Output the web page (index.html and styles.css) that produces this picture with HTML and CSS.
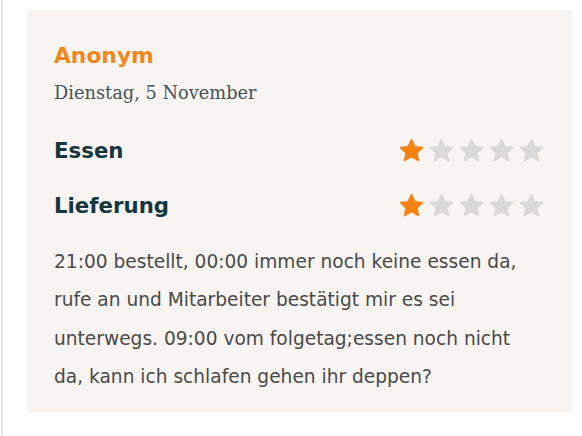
FILE: index.html
```html
<!DOCTYPE html>
<html lang="de">
<head>
<meta charset="utf-8">
<link rel="stylesheet" href="styles.css">
</head>
<body>
<div class="frame">
  <article class="card">
    <h2 class="author">Anonym</h2>
    <div class="date">Dienstag, 5 November</div>
    <div class="ratings">
      <div class="rating">
        <span class="label">Essen</span>
        <span class="stars">
          <svg class="star on" viewBox="0 0 24 24"><path d="M12 2.6l2.9 6.1 6.7.8-4.9 4.6 1.3 6.6L12 17.4l-6 3.3 1.3-6.6-4.9-4.6 6.7-.8z"/></svg>
          <svg class="star" viewBox="0 0 24 24"><path d="M12 2.6l2.9 6.1 6.7.8-4.9 4.6 1.3 6.6L12 17.4l-6 3.3 1.3-6.6-4.9-4.6 6.7-.8z"/></svg>
          <svg class="star" viewBox="0 0 24 24"><path d="M12 2.6l2.9 6.1 6.7.8-4.9 4.6 1.3 6.6L12 17.4l-6 3.3 1.3-6.6-4.9-4.6 6.7-.8z"/></svg>
          <svg class="star" viewBox="0 0 24 24"><path d="M12 2.6l2.9 6.1 6.7.8-4.9 4.6 1.3 6.6L12 17.4l-6 3.3 1.3-6.6-4.9-4.6 6.7-.8z"/></svg>
          <svg class="star" viewBox="0 0 24 24"><path d="M12 2.6l2.9 6.1 6.7.8-4.9 4.6 1.3 6.6L12 17.4l-6 3.3 1.3-6.6-4.9-4.6 6.7-.8z"/></svg>
        </span>
      </div>
      <div class="rating">
        <span class="label">Lieferung</span>
        <span class="stars">
          <svg class="star on" viewBox="0 0 24 24"><path d="M12 2.6l2.9 6.1 6.7.8-4.9 4.6 1.3 6.6L12 17.4l-6 3.3 1.3-6.6-4.9-4.6 6.7-.8z"/></svg>
          <svg class="star" viewBox="0 0 24 24"><path d="M12 2.6l2.9 6.1 6.7.8-4.9 4.6 1.3 6.6L12 17.4l-6 3.3 1.3-6.6-4.9-4.6 6.7-.8z"/></svg>
          <svg class="star" viewBox="0 0 24 24"><path d="M12 2.6l2.9 6.1 6.7.8-4.9 4.6 1.3 6.6L12 17.4l-6 3.3 1.3-6.6-4.9-4.6 6.7-.8z"/></svg>
          <svg class="star" viewBox="0 0 24 24"><path d="M12 2.6l2.9 6.1 6.7.8-4.9 4.6 1.3 6.6L12 17.4l-6 3.3 1.3-6.6-4.9-4.6 6.7-.8z"/></svg>
          <svg class="star" viewBox="0 0 24 24"><path d="M12 2.6l2.9 6.1 6.7.8-4.9 4.6 1.3 6.6L12 17.4l-6 3.3 1.3-6.6-4.9-4.6 6.7-.8z"/></svg>
        </span>
      </div>
    </div>
    <p class="text">21:00 bestellt, 00:00 immer noch keine essen da, rufe an und Mitarbeiter bestätigt mir es sei unterwegs. 09:00 vom folgetag;essen noch nicht da, kann ich schlafen gehen ihr deppen?</p>
  </article>
</div>
</body>
</html>
```

FILE: styles.css
```css
html, body {
  margin: 0;
  padding: 0;
  background: #ffffff;
}
.frame {
  width: 582px;
  height: 436px;
  box-sizing: border-box;
  border-left: 2px solid #e6e6e6;
  margin-left: 1px;
  padding: 10px 10px 0 24px;
}
.card {
  background: #f7f4f1;
  width: 545px;
  height: 403px;
  box-sizing: border-box;
  padding: 32px 27px 0 27px;
}
.author {
  margin: 0;
  font-family: "DejaVu Sans", sans-serif;
  font-weight: 700;
  font-size: 21.8px;
  line-height: 28px;
  color: #f0871a;
}
.date {
  margin-top: 11px;
  font-family: "DejaVu Serif", serif;
  font-weight: 300;
  font-size: 17.8px;
  line-height: 24px;
  color: #46535a;
}
.ratings {
  margin-top: 30px;
  display: flex;
  flex-direction: column;
  gap: 25px;
}
.rating {
  display: flex;
  justify-content: space-between;
  align-items: center;
  height: 30px;
}
.label {
  font-family: "DejaVu Sans", sans-serif;
  font-weight: 700;
  font-size: 21.3px;
  color: #16363f;
}
.stars {
  display: flex;
  gap: 3px;
}
.star {
  width: 27px;
  height: 27px;
  fill: #d9d9d9;
  stroke: #d9d9d9;
  stroke-width: 1.6;
  stroke-linejoin: round;
}
.star.on {
  fill: #f58213;
  stroke: #f58213;
}
.text {
  margin: 23px 0 0 0;
  font-family: "DejaVu Sans", sans-serif;
  font-size: 18.6px;
  line-height: 38.3px;
  color: #4a4a4a;
}
```
